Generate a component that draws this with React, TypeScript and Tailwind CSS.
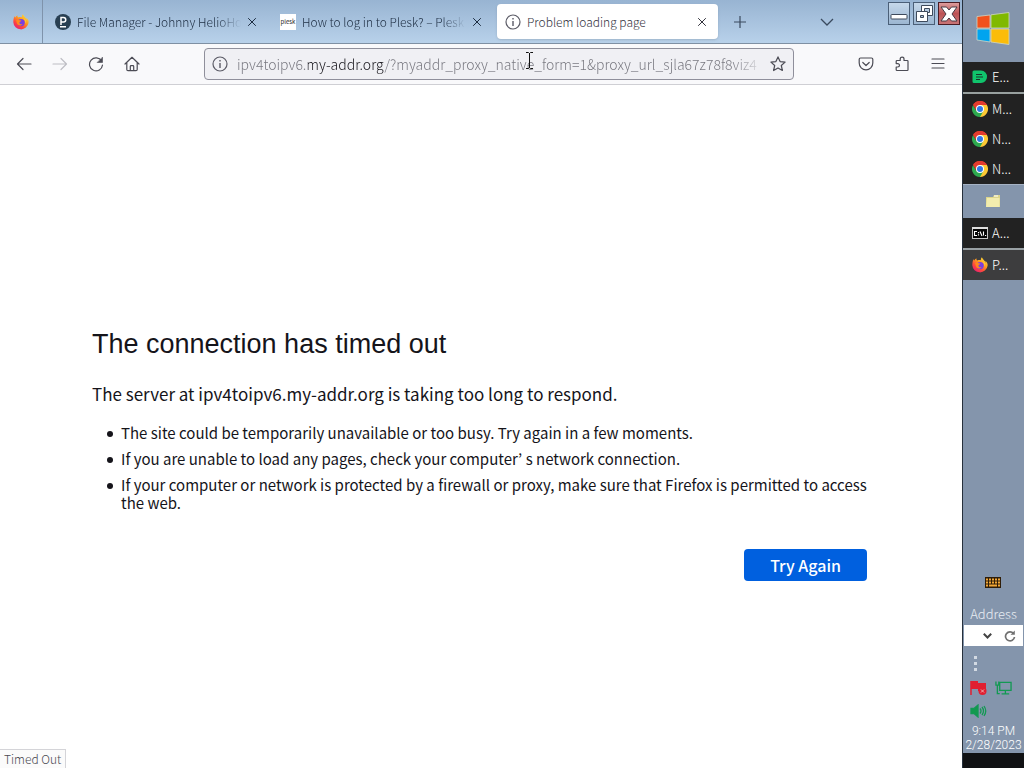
import React from 'react';

const ADDRESS = 'ipv4toipv6.my-addr.org/?myaddr_proxy_native_form=1&proxy_url_sjla67z78f8viz4';

const FirefoxIcon: React.FC = () => (
  <svg width="16" height="16" viewBox="0 0 16 16" className="shrink-0" aria-hidden="true">
    <defs>
      <linearGradient id="fx-flame" x1="0.85" y1="0.05" x2="0.2" y2="0.95">
        <stop offset="0" stopColor="#ffe23e" />
        <stop offset="0.4" stopColor="#ff9a1f" />
        <stop offset="0.7" stopColor="#ff4a3c" />
        <stop offset="1" stopColor="#e81f70" />
      </linearGradient>
    </defs>
    <path
      d="M15.3 6.2c-.4-1-1.200-2-1.900-2.300.5 1 .8 2 .9 2.700C13.300 4 11.200 3 9.800.3 9 1.200 8.700 2.300 8.800 3.300 8 2.900 6 3 5.200 3.400 4.500 3 4.300 2 4.500 1.300 3.400 1.800 2.700 2.700 2.200 3.500 1.700 3.300 1.800 2.400 1.800 2.100.8 3.300.3 5.800.3 8.200a7.700 7.700 0 0 0 15.300.6c.1-.9 0-1.800-.3-2.600z"
      fill="url(#fx-flame)"
    />
    <circle cx="8.200" cy="8.600" r="3.600" fill="#7a3fe0" />
    <path d="M3.200 6.300c1.300-.8 2.600-.5 3.500 0 .8.100 1.600.100 1.600.5-.1.800-1.600.8-1.900 1.600-.1 1.400 1.500 2.200 3.100 1.500-1 2.500-5.300 1.700-5.800-1.400z" fill="#ff8a1c" />
    <path d="M9.500 4.500c2.300.6 3.400 2.900 2.300 5.300 2-1.700 1.500-5.200-2.300-5.300z" fill="#ffcf35" />
  </svg>
);

const ChromeIcon: React.FC = () => (
  <svg width="16" height="16" viewBox="0 0 16 16" className="shrink-0" aria-hidden="true">
    <path d="M8 8 1.070 4A8 8 0 0 1 14.930 4z" fill="#e33b2e" />
    <path d="M8 8V4h6.930A8 8 0 0 1 8 16z" fill="#fcc934" />
    <path d="M8 8l3.460 2L8 16A8 8 0 0 1 1.070 4L4.540 10z" fill="#2da94f" />
    <path d="M1.070 4 4.540 10 8 8V4h6.930A8 8 0 0 0 1.070 4z" fill="#e33b2e" />
    <circle cx="8" cy="8" r="4" fill="#fff" />
    <circle cx="8" cy="8" r="3" fill="#2f78e6" />
  </svg>
);

const EvernoteIcon: React.FC = () => (
  <svg width="16" height="16" viewBox="0 0 16 16" className="shrink-0" aria-hidden="true">
    <path d="M2 1.500h7a6 6 0 0 1 6 6.500 6 6 0 0 1-6 6H2a1.500 1.500 0 0 1-1.500-1.500V3A1.500 1.500 0 0 1 2 1.500z" fill="#10c46c" />
    <path d="M4 5.500h6M4 8h7M4 10.500h4" stroke="#17382a" strokeWidth="1.200" />
  </svg>
);

const FolderIcon: React.FC = () => (
  <svg width="16" height="16" viewBox="0 0 16 16" aria-hidden="true">
    <path d="M1 3h7l1-2h6v12H1z" fill="#dcd58c" />
    <path d="M2 4h12.500v9H1z" fill="#f2ecae" />
    <path d="M9 2h4" stroke="#fff" />
  </svg>
);

const ConsoleIcon: React.FC = () => (
  <svg width="16" height="16" viewBox="0 0 16 16" className="shrink-0" aria-hidden="true">
    <rect x="0.500" y="2.500" width="15" height="11" fill="#050505" stroke="#c4c4c4" />
    <path d="M0 3h16" stroke="#ddd" strokeWidth="2" />
    <path d="M5 6.500H2.500v4H5M6.500 7v1.200M6.500 9.300v1.200M8 6.500l2 4.500M11.500 6.500v4M13 10.500h1.200" fill="none" stroke="#fff" strokeWidth="1.100" />
  </svg>
);

const InfoIcon: React.FC = () => (
  <svg width="16" height="16" viewBox="0 0 16 16" fill="none" stroke="#5b5b66" strokeWidth="1.200" className="shrink-0" aria-hidden="true">
    <circle cx="8" cy="8" r="7" />
    <path d="M8 7v5M8 4v1.500" strokeWidth="1.400" />
  </svg>
);

const CloseIcon: React.FC = () => (
  <svg width="10" height="10" viewBox="0 0 10 10" fill="none" stroke="currentColor" aria-hidden="true">
    <path d="M1.200 1.200l7.600 7.600M8.800 1.200 1.200 8.800" />
  </svg>
);

const ToolIcon: React.FC<{ children: React.ReactNode }> = ({ children }) => (
  <svg
    width="16"
    height="16"
    viewBox="0 0 16 16"
    fill="none"
    stroke="currentColor"
    strokeWidth="1.200"
    strokeLinecap="round"
    strokeLinejoin="round"
    aria-hidden="true"
  >
    {children}
  </svg>
);

const TabBar: React.FC = () => (
  <header className="flex h-11 border-b border-[#7f90a3] bg-linear-to-b from-[#98b4d2] to-[#b8d1ea] text-xs text-[#1c2c40]">
    <button aria-label="Firefox View" className="flex w-[43px] shrink-0 items-center justify-center border-r border-[#7f93ab]">
      <FirefoxIcon />
    </button>
    <div role="tablist" className="flex min-w-0 items-stretch">
      <div role="tab" className="flex w-[225px] min-w-0 items-center gap-[6px] pl-3 pr-[11px]">
        <svg width="16" height="16" viewBox="0 0 16 16" className="shrink-0" aria-hidden="true">
          <circle cx="8" cy="8" r="8" fill="#283f52" />
          <path d="M6 11V3.500h2.500a2.200 2.200 0 0 1 0 4.500H6M5 12.700h6" fill="none" stroke="#fff" strokeWidth="1.500" />
        </svg>
        <span className="min-w-0 flex-1 whitespace-nowrap [mask-image:linear-gradient(to_left,transparent,black_24px)]">
          File Manager - Johnny HelioHo
        </span>
        <button aria-label="Close File Manager tab"><CloseIcon /></button>
      </div>
      <div role="tab" className="flex w-[225px] min-w-0 items-center gap-[6px] pl-3 pr-[11px]">
        <span className="flex size-4 shrink-0 items-center justify-center bg-white text-[6px] font-normal text-[#222]">plesk</span>
        <span className="min-w-0 flex-1 whitespace-nowrap [mask-image:linear-gradient(to_left,transparent,black_24px)]">
          How to log in to Plesk? – Plesk
        </span>
        <button aria-label="Close Plesk tab"><CloseIcon /></button>
      </div>
      <div
        role="tab"
        aria-selected="true"
        className="my-1 ml-1 flex w-[221px] min-w-0 items-center gap-[6px] rounded-sm bg-white pl-2 pr-[11px] text-[#33333d] shadow-sm"
      >
        <InfoIcon />
        <span className="min-w-0 flex-1 whitespace-nowrap">Problem loading page</span>
        <button aria-label="Close current tab"><CloseIcon /></button>
      </div>
    </div>
    <button aria-label="New tab" className="w-11 shrink-0 pl-4 text-[#3a4a5e]">
      <svg width="12" height="12" viewBox="0 0 12 12" stroke="currentColor" strokeWidth="1.200" aria-hidden="true">
        <path d="M6 0v12M0 6h12" />
      </svg>
    </button>
    <div className="flex-1" />
    <button aria-label="List all tabs" className="mr-[54px] text-[#3a4a5e]">
      <svg width="14" height="8" viewBox="0 0 14 8" fill="none" stroke="currentColor" strokeWidth="1.300" aria-hidden="true">
        <path d="M1 1l6 6 6-6" />
      </svg>
    </button>
    <div className="flex shrink-0 gap-[3px] pr-[2px] pt-[2px]">
      <button aria-label="Minimize" className="h-[23px] w-[22px] border border-[#4b5f77] bg-linear-to-b from-[#c6d8ea] to-[#9cb6d1]">
        <svg width="20" height="20" viewBox="0 0 20 20" aria-hidden="true">
          <rect x="2" y="10.500" width="16" height="4.500" rx="0.800" fill="#fff" stroke="#3e4a5c" />
        </svg>
      </button>
      <button aria-label="Restore" className="h-[23px] w-[22px] border border-[#4b5f77] bg-linear-to-b from-[#c6d8ea] to-[#9cb6d1]">
        <svg width="20" height="20" viewBox="0 0 20 20" fillRule="evenodd" fill="#fff" stroke="#3e4a5c" aria-hidden="true">
          <path d="M7.500 1.500h11v10h-11zM10.500 4.500h5v4h-5z" />
          <path d="M2.500 7.500h11v10h-11zM6.500 11.500h3v2h-3z" />
        </svg>
      </button>
      <button aria-label="Close" className="h-[23px] w-[22px] border border-[#4a1c24] bg-linear-to-b from-[#dc9c9d] via-[#bd5255] to-[#c87476]">
        <svg width="20" height="20" viewBox="0 0 20 20" aria-hidden="true">
          <path d="M2 3h5.500L10 6l2.500-3H18l-5 7 5 7h-5.500L10 14l-2.500 3H2l5-7z" fill="#fff" stroke="#473a45" />
        </svg>
      </button>
    </div>
  </header>
);

const Toolbar: React.FC = () => (
  <nav className="flex h-[41px] items-center border-b border-[#cfcfd4] bg-[#f9f9fb] px-4 text-[#4c4c55]">
    <div className="flex gap-5">
      <button aria-label="Back">
        <ToolIcon><path d="M15 8H1.500M7 2.500 1.500 8 7 13.500" /></ToolIcon>
      </button>
      <button aria-label="Forward" disabled className="text-[#bebec4]">
        <ToolIcon><path d="M1 8h13.500M9 2.500 14.500 8 9 13.500" /></ToolIcon>
      </button>
      <button aria-label="Reload">
        <ToolIcon>
          <path d="M13.600 5A6.500 6.500 0 1 0 14.500 9" />
          <path d="M14.500 1.500v5h-5z" fill="currentColor" strokeWidth="0.600" />
        </ToolIcon>
      </button>
      <button aria-label="Home">
        <ToolIcon>
          <path d="M1 8l7-6.700L15 8M2.800 6.800v6.700c0 .8.500 1.200 1.200 1.200h8c.7 0 1.200-.4 1.200-1.200V6.800M6.300 14.500v-4c0-.5.300-.8.800-.8h1.800c.5 0 .8.300.8.800v4" />
        </ToolIcon>
      </button>
    </div>
    <div className="ml-16 flex h-8 min-w-0 flex-1 items-center gap-[9px] rounded-sm border border-[#8f8f9b] bg-[#f0f0f4] px-[7px]">
      <InfoIcon />
      <input
        aria-label="Address"
        readOnly
        value={ADDRESS}
        className="h-6 min-w-0 flex-1 bg-[linear-gradient(90deg,#75757d_71px,#15141a_71px,#15141a_148px,#75757d_148px,#75757d_495px,#e0e0e4_524px)] bg-clip-text text-sm font-light text-transparent outline-none"
      />
      <button aria-label="Bookmark this page">
        <ToolIcon><path d="M8 .9l2.100 4.700 5 .5-3.800 3.400 1.100 5L8 11.900l-4.400 2.600 1.100-5L.9 6.100l5-.5z" /></ToolIcon>
      </button>
    </div>
    <div className="ml-16 flex gap-5">
      <button aria-label="Save to Pocket">
        <ToolIcon>
          <path d="M2.500 2h11c.8 0 1.300.5 1.300 1.300V7a6.800 6.800 0 0 1-13.600 0V3.300C1.200 2.500 1.700 2 2.500 2z" />
          <path d="M4.800 6.500 8 9.500l3.200-3" />
        </ToolIcon>
      </button>
      <button aria-label="Extensions">
        <ToolIcon>
          <path d="M3 4.500h3.200V3a1.900 1.900 0 0 1 3.800 0v1.500h3.200c.5 0 .8.300.8.800v8.400c0 .5-.3.800-.8.800H3c-.5 0-.8-.3-.8-.8V11h1.600a1.700 1.700 0 0 0 0-3.400H2.200V5.300c0-.5.300-.8.800-.8z" />
        </ToolIcon>
      </button>
      <button aria-label="Open application menu">
        <ToolIcon><path d="M2 3h12M2 7.500h12M2 12h12" /></ToolIcon>
      </button>
    </div>
  </nav>
);

const REASONS = [
  'The site could be temporarily unavailable or too busy. Try again in a few moments.',
  'If you are unable to load any pages, check your computer’ s network connection.',
  'If your computer or network is protected by a firewall or proxy, make sure that Firefox is permitted to access the web.',
];

const ErrorPage: React.FC = () => (
  <main className="flex-1 bg-white pl-[92px] pr-[90px] pt-[241px] font-normal text-[#15141a]">
    <h1 className="font-['Liberation_Sans',sans-serif] text-[27px] leading-9">The connection has timed out</h1>
    <p className="mt-5 text-[17px] leading-6">
      The server at ipv4toipv6.my-addr.org is taking too long to respond.
    </p>
    <ul className="mt-[18px] space-y-2 pl-[29px] text-[15px] leading-[18px]">
      {REASONS.map((reason) => (
        <li
          key={reason}
          className="relative before:absolute before:top-[7px] before:-left-[14px] before:size-[6px] before:rounded-full before:bg-[#15141a]"
        >
          {reason}
        </li>
      ))}
    </ul>
    <div className="mt-[37px] flex justify-end pr-[5px]">
      <button className="h-8 rounded-sm bg-[#0060df] px-[26px] text-base font-medium text-white">Try Again</button>
    </div>
  </main>
);

const TaskButton: React.FC<{ icon: React.ReactNode; label: string }> = ({ icon, label }) => (
  <button className="flex h-[30px] w-full items-center gap-1 pl-[9px] text-[13px]">
    {icon}
    {label}
  </button>
);

const Taskbar: React.FC = () => (
  <aside className="flex w-[62px] shrink-0 flex-col border-l border-[#26303c] bg-[#8495ac] font-light text-white">
    <button aria-label="Start" className="flex h-[62px] items-center justify-center pr-[2px] pb-1">
      <svg width="34" height="34" viewBox="0 0 34 34" stroke="#cfd7c4" strokeWidth="0.800" aria-hidden="true">
        <path d="M1 4.500 14 3v13H1z" fill="#f1511b" />
        <path d="M15 2.800 33 .500V16H15z" fill="#80b900" />
        <path d="M1 17h13v13L1 28z" fill="#00a4ef" />
        <path d="M15 17h18v15.500L15 30z" fill="#fbbc09" />
      </svg>
    </button>
    <div className="border-b-2 border-[#98a09f] bg-[#222222]">
      <TaskButton icon={<EvernoteIcon />} label="E..." />
    </div>
    <div className="bg-[#222222]">
      <TaskButton icon={<ChromeIcon />} label="M..." />
      <TaskButton icon={<ChromeIcon />} label="N..." />
      <TaskButton icon={<ChromeIcon />} label="N..." />
    </div>
    <button aria-label="File Explorer" className="flex h-[34px] items-center justify-center border-t border-[#a5b2c4] pr-[2px]">
      <FolderIcon />
    </button>
    <div className="border-b-2 border-[#98a0a4] bg-[#222222]">
      <TaskButton icon={<ConsoleIcon />} label="A..." />
    </div>
    <div className="bg-[#3d3d3e]">
      <TaskButton icon={<FirefoxIcon />} label="P..." />
    </div>
    <div className="flex-1" />
    <button aria-label="Touch keyboard" className="mb-[15px] flex justify-center pr-[2px]">
      <svg width="16" height="12" viewBox="0 0 16 12" aria-hidden="true">
        <rect width="16" height="11" fill="#2f1d08" />
        <path d="M1 2.500h14M1 5.500h14" stroke="#f2a737" strokeWidth="2" strokeDasharray="2 1" />
        <path d="M1 8.500h2M4 8.500h8M13 8.500h2" stroke="#f2a737" strokeWidth="2" />
      </svg>
    </button>
    <div className="text-center text-[13px] leading-5 text-[#e8edf3]">Address</div>
    <div className="mt-px mr-px ml-px flex h-[21px] items-center justify-end gap-3 bg-white pr-[7px] text-[#444]">
      <button aria-label="Address history">
        <svg width="9" height="6" viewBox="0 0 9 6" fill="none" stroke="currentColor" strokeWidth="2" aria-hidden="true">
          <path d="M.800.800 4.500 4.500 8.200.800" />
        </svg>
      </button>
      <button aria-label="Refresh address">
        <svg width="12" height="12" viewBox="0 0 12 12" fill="none" stroke="#707070" strokeWidth="1.700" aria-hidden="true">
          <path d="M9.500 3.500A4.500 4.500 0 1 0 10.500 7" />
          <path d="M10.800.500v4.300H6.500z" fill="#707070" stroke="none" />
        </svg>
      </button>
    </div>
    <svg width="4" height="16" viewBox="0 0 4 16" fill="#d3dae3" className="mt-[10px] ml-[11px]" aria-hidden="true">
      <rect width="3" height="3" />
      <rect y="6" width="3" height="3" />
      <rect y="12" width="3" height="3" />
    </svg>
    <div className="mt-2 flex flex-wrap gap-2 pl-[7px]">
      <svg width="17" height="16" viewBox="0 0 17 16" aria-hidden="true">
        <path d="M1 1v14" stroke="#e01f30" strokeWidth="1.500" />
        <path d="M1 1h7v2h8v8H8V9H1z" fill="#e01f30" />
        <circle cx="12.500" cy="11" r="4" fill="#e01f30" />
        <path d="M11 9.500l3 3M14 9.500l-3 3" stroke="#f0b0b0" />
      </svg>
      <svg width="17" height="16" viewBox="0 0 18 16" fill="none" stroke="#139953" strokeWidth="1.400" aria-hidden="true">
        <path d="M5 2h12v8.500H5zM11 11v3M7 14.300h8M1 1v4h3V1M2.500 5v9H5" />
      </svg>
      <svg width="17" height="14" viewBox="0 0 17 14" fill="none" stroke="#139953" strokeWidth="1.300" aria-hidden="true">
        <path d="M1 4.500h3l4-3.500v12L4 9.500H1z" fill="#12994e" />
        <path d="M10 4.500q2 2.500 0 5M12 3q3 4 0 8M14 2q3.500 5 0 10" />
      </svg>
    </div>
    <div className="mt-[6px] text-center font-['Roboto',sans-serif] text-xs leading-[14px] whitespace-nowrap">
      <div>9:14 PM</div>
      <div>2/28/2023</div>
    </div>
    <div className="mt-px h-[15px] bg-[#101113]" />
  </aside>
);

const App: React.FC = () => {
  return (
    <div className="relative flex h-screen overflow-hidden font-['Noto_Sans_CJK_KR',sans-serif] font-light">
      <div className="flex min-w-0 flex-1 flex-col">
        <TabBar />
        <Toolbar />
        <ErrorPage />
      </div>
      <Taskbar />

      {/* Status bubble over the page */}
      <div className="absolute bottom-0 left-0 border border-b-0 border-l-0 border-[#d4d4d8] bg-[#fbfbfb] px-1 text-xs leading-[18px] text-[#4a4a52]">
        Timed Out
      </div>

      {/* Text cursor */}
      <svg width="7" height="17" viewBox="0 0 7 17" fill="none" stroke="#111" className="pointer-events-none absolute top-[52px] left-[526px]" aria-hidden="true">
        <path d="M0 .500h2.500l1 1 1-1H7M3.500 1v15M0 16.500h2.500l1-1 1 1H7" />
      </svg>
    </div>
  );
};

export default App;
